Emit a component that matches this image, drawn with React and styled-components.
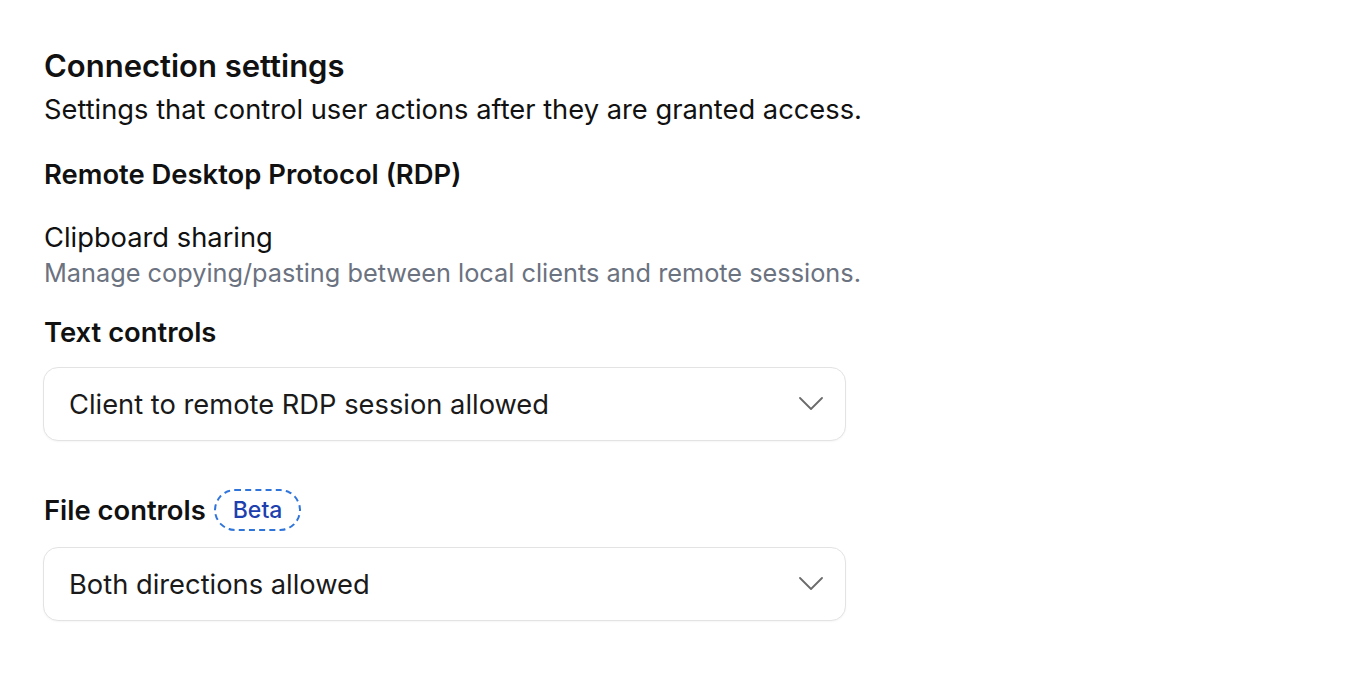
import React from "react";
import styled, { createGlobalStyle } from "styled-components";

const GlobalStyle = createGlobalStyle`
  body {
    margin: 0;
    background: #ffffff;
    font-family: Inter, "Noto Sans", sans-serif;
    color: #111111;
  }
`;

const Page = styled.div`
  padding: 46px 43px 40px 43px;
  display: flex;
  flex-direction: column;
  align-items: flex-start;
  white-space: nowrap;
`;

const Title = styled.h1`
  margin: 0;
  font-size: 31px;
  line-height: 40px;
  font-weight: 600;
  padding-left: 1px;
`;

const Lead = styled.p`
  margin: 6px 0 0 0;
  font-size: 27.3px;
  line-height: 36px;
  padding-left: 1px;
`;

const Section = styled.h2`
  margin: 28px 0 0 0;
  font-size: 27.4px;
  line-height: 36px;
  font-weight: 600;
  padding-left: 1px;
`;

const SettingName = styled.div`
  margin-top: 28px;
  font-size: 27.3px;
  line-height: 36px;
  padding-left: 1px;
`;

const SettingHint = styled.div`
  font-size: 25.3px;
  line-height: 34px;
  color: #6b7280;
  padding-left: 1px;
`;

const FieldLabel = styled.div`
  display: flex;
  align-items: center;
  gap: 8px;
  min-height: 42px;
  margin-top: ${({ $gap }) => $gap}px;
  font-size: 27.4px;
  line-height: 36px;
  font-weight: 600;
  padding-left: 1px;
`;

const Badge = styled.span`
  display: inline-flex;
  align-items: center;
  height: 42px;
  box-sizing: border-box;
  padding: 0 17px;
  border: 2px dashed #2f74db;
  border-radius: 999px;
  color: #1e40af;
  font-size: 23px;
  font-weight: 500;
`;

const Select = styled.button`
  margin-top: ${({ $gap }) => $gap}px;
  display: flex;
  align-items: center;
  justify-content: space-between;
  width: 803px;
  height: 74px;
  padding: 0 22px 0 25px;
  background: #ffffff;
  border: 1.5px solid #e3e3e3;
  border-radius: 15px;
  box-shadow: 0 1px 2px rgba(0, 0, 0, 0.04);
  font-family: inherit;
  font-size: 27.3px;
  color: #1a1a1a;
  text-align: left;
  cursor: pointer;
`;

const Chevron = () => (
  <svg width="24" height="24" viewBox="0 0 24 24" fill="none">
    <path d="M1 6 L12 17 L23 6" stroke="#6b6b6b" strokeWidth="1.8" strokeLinecap="round" strokeLinejoin="round" />
  </svg>
);

const App = () => (
  <>
    <GlobalStyle />
    <Page>
      <Title>Connection settings</Title>
      <Lead>Settings that control user actions after they are granted access.</Lead>
      <Section>Remote Desktop Protocol (RDP)</Section>
      <SettingName>Clipboard sharing</SettingName>
      <SettingHint>Manage copying/pasting between local clients and remote sessions.</SettingHint>
      <FieldLabel $gap={21}>Text controls</FieldLabel>
      <Select $gap={14}>
        <span>Client to remote RDP session allowed</span>
        <Chevron />
      </Select>
      <FieldLabel $gap={48}>
        File controls
        <Badge>Beta</Badge>
      </FieldLabel>
      <Select $gap={16}>
        <span>Both directions allowed</span>
        <Chevron />
      </Select>
    </Page>
  </>
);

export default App;
